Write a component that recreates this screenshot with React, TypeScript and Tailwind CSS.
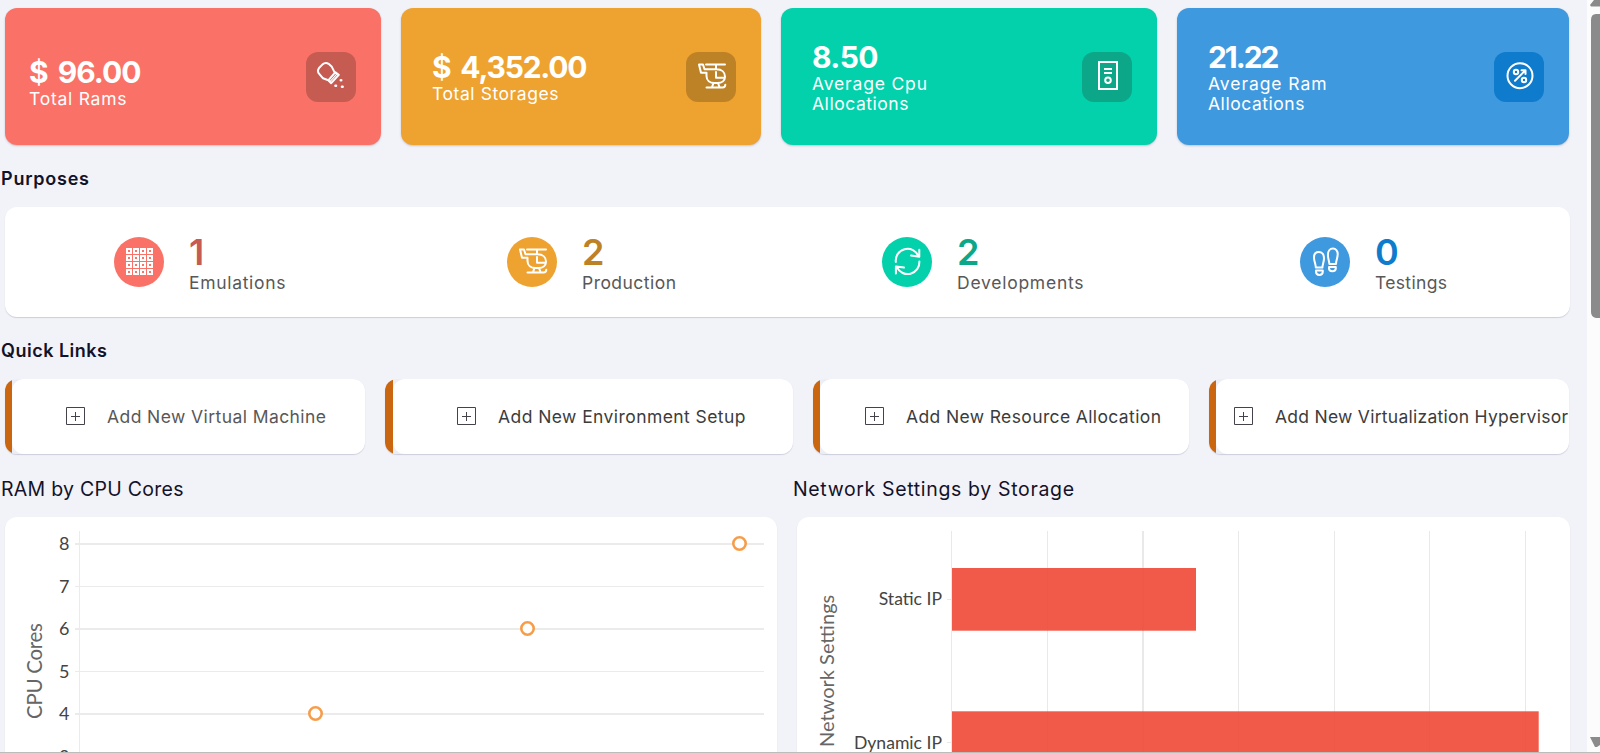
import { useLayoutEffect, useRef, useState } from "react";
import type { ReactNode } from "react";

/* A single line of text whose tracking is computed so that it spans a given width. */
function Line({ text, width, className = "" }: { text: string; width: number; className?: string }) {
  const ref = useRef<HTMLSpanElement>(null);
  const [tracking, setTracking] = useState(0);
  useLayoutEffect(() => {
    if (!ref.current || text.length < 2) return;
    const natural = ref.current.getBoundingClientRect().width - tracking * text.length;
    setTracking((width + 1.5 - natural) / (text.length - 1));
  }, [text, width]);
  return (
    <span className={`block whitespace-nowrap ${className}`}>
      <span ref={ref} style={{ letterSpacing: tracking }}>
        {text}
      </span>
    </span>
  );
}

function Icon({ children, sw = 2 }: { children: ReactNode; sw?: number }) {
  return (
    <svg viewBox="0 0 50 50" className="size-[50px]" fill="none" stroke="#fff" strokeWidth={sw} strokeLinecap="round" strokeLinejoin="round">
      {children}
    </svg>
  );
}

const Shaker = () => (
  <Icon>
    <path d="M22.3 28.3 17 26.3 12.8 21.3Q11 18.8 13 16L16.3 12.6Q19.5 9.8 22.6 11.8L25.6 14.4 28.6 20.4M22.3 28.3 29.4 20.2 32.8 22.8 25.2 31.2Z" />
    <path d="m24 29.6 7.2-8" strokeWidth="1.2" />
    <path d="M34.8 28.3h.4M29.5 33.7h.5M36 34.7h.6" strokeWidth="2.6" />
  </Icon>
);

const Helicopter = () => (
  <Icon>
    <path d="M20 12.5H39M30 12.5V17M13 12.5H17L18.5 17.3H30.5C36 17.3 39 20.6 39 24.5S36 31 31.5 31H28.5C24 31 20.5 28.5 20.5 24V20.8H15Z" />
    <path d="M30 20V25.8H38.500M27.5 31 26 35.2M32 31 33.5 35.2M20.5 35.5H36.5C38.5 35.5 39.3 34.4 39.3 32.8" />
  </Icon>
);

const Server = () => (
  <Icon sw={2}>
    <path d="M17 10H35V37H17ZM22 17H30M22 21H30" strokeLinecap="butt" strokeLinejoin="miter" />
    <circle cx="26" cy="28.3" r="2.8" />
  </Icon>
);

const Percent = () => (
  <Icon>
    <circle cx="26" cy="23.7" r="12.5" />
    <circle cx="22" cy="20" r="2.2" />
    <circle cx="30" cy="28" r="2.2" />
    <path d="M21 28.800 31.3 18.4M27.5 18.2H31.5V22" />
  </Icon>
);

const Grid = () => (
  <Icon sw={2}>
    {[0, 1, 2, 3].map((r) =>
      [0, 1, 2, 3].map((c) => <rect key={`${r}-${c}`} x={13 + c * 7} y={12 + r * 7} width="4" height="4" strokeLinejoin="miter" />),
    )}
  </Icon>
);

const Refresh = () => (
  <Icon>
    <path d="M13.8 25A11.8 11.8 0 0 1 36.5 19.3M37.3 12.8V19.8L29 18.6" />
    <path d="M37.4 24.5A11.8 11.8 0 0 1 15 30.4M13.9 36.6V29.4L22 30.6" />
  </Icon>
);

const Shoes = () => (
  <Icon>
    <path d="M15.8 30.6C15.8 27 14 24.5 14 20.4C14 17 16 14.9 18.8 14.9C22 14.9 24 17.6 24 21.3C24 25 22.6 27 22.4 30.6ZM16 33.6H22.8V34.8C22.8 39 16 39 16 34.8Z" />
    <path d="M36 27C36 23.6 37.7 21.3 37.7 17.1C37.7 13.8 35.8 11.6 33 11.6C29.800 11.6 27.9 14.3 27.9 17.9C27.9 21.5 29.1 23.5 29.4 27ZM35.8 30H29V31.2C29 35.3 35.8 35.3 35.8 31.2Z" />
  </Icon>
);

function StatCard({ box, text, badge, icon, value, valueW, lines }: { box: string; text: string; badge: string; icon: ReactNode; value: string; valueW: number; lines: [string, number][] }) {
  return (
    <div className={`flex h-[137px] justify-between rounded-xl pr-[25px] text-white shadow-[0_1px_2px_rgba(60,60,100,0.25)] ${box}`}>
      <div className={text}>
        <Line text={value} width={valueW} className="text-[30px] leading-[33px] font-bold [word-spacing:4px]" />
        {lines.map(([t, w]) => (
          <Line key={t} text={t} width={w} className="text-[17.5px] leading-5" />
        ))}
      </div>
      <div className={`mt-11 size-[50px] rounded-xl ${badge}`}>{icon}</div>
    </div>
  );
}

function Purpose({ box, circle, color, icon, value, valueW, label, labelW }: { box: string; circle: string; color: string; icon: ReactNode; value: string; valueW: number; label: string; labelW: number }) {
  return (
    <div className={`flex ${box}`}>
      <div className={`mt-[30px] size-[50px] shrink-0 rounded-full ${circle}`}>{icon}</div>
      <div className="ml-[25px] pt-[25px]">
        <Line text={value} width={valueW} className={`text-[36px] leading-10 font-semibold ${color}`} />
        <Line text={label} width={labelW} className="mt-px text-[17.5px] leading-5 text-[#585858]" />
      </div>
    </div>
  );
}

function QuickLink({ box, pad, color, label, width }: { box: string; pad: string; color: string; label: string; width: number }) {
  return (
    <div className={`h-[75px] overflow-hidden rounded-xl shadow-[0_1px_1px_rgba(60,60,110,0.2)] ${box}`}>
      <div className={`flex h-full items-center rounded-xl bg-white ${pad}`}>
        <svg viewBox="0 0 19 19" className="size-[19px] shrink-0" fill="none" stroke="#44424a">
          <path d="M.5.5H18.5V17.5H.5ZM9.5 5V14M5 9.5H14" />
        </svg>
        <Line text={label} width={width} className={`ml-[22px] text-[17.5px] leading-5 ${color}`} />
      </div>
    </div>
  );
}

function Card({ className = "", children }: { className?: string; children: ReactNode }) {
  return <div className={`rounded-xl bg-white shadow-[0_1px_1px_rgba(60,60,110,0.2)] ${className}`}>{children}</div>;
}

function ScatterChart() {
  return (
    <svg viewBox="5 517 772 260" className="h-[260px] w-[772px] font-['Lato',sans-serif]">
      <g fill="#ebebeb">
        <rect x="79" y="531" width="1" height="240" />
        {[543, 586, 628, 671, 713].map((y, i) => (
          <rect key={y} x="75" y={y} width="689" height={i % 2 ? 1 : 2} />
        ))}
      </g>
      <g fill="#444" fontSize="18" textAnchor="end">
        {[8, 7, 6, 5, 4, 3].map((n, i) => (
          <text key={n} x="69.5" y={550 + i * 42.5}>{n}</text>
        ))}
      </g>
      <text transform="translate(42.3 719) rotate(-90)" fontSize="20.5" fill="#666" textLength="96">CPU Cores</text>
      <g fill="#fff" stroke="#f79d4a" strokeWidth="2.6">
        <circle cx="739.5" cy="543.5" r="6.200" />
        <circle cx="527.5" cy="628.5" r="6.200" />
        <circle cx="315.5" cy="713.5" r="6.200" />
      </g>
    </svg>
  );
}

function BarChart() {
  return (
    <svg viewBox="797 517 773 260" className="h-[260px] w-[773px] font-['Lato',sans-serif]">
      <g fill="#e9e9e9">
        {[951, 1047, 1142, 1238, 1334, 1429, 1525].map((x) => (
          <rect key={x} x={x} y="531" width={x === 1142 ? 2 : 1} height="240" />
        ))}
        <rect x="947" y="599" width="4" height="1" />
        <rect x="947" y="742" width="4" height="1" />
      </g>
      <g fill="#f04834" fillOpacity=".9">
        <rect x="952" y="568" width="244" height="62.7" />
        <rect x="952" y="711.3" width="586.7" height="62" />
      </g>
      <g fill="#444" fontSize="17.600" textAnchor="end">
        <text x="942" y="605">Static IP</text>
        <text x="942" y="749">Dynamic IP</text>
      </g>
      <text transform="translate(834 747) rotate(-90)" fontSize="20" fill="#666">Network Settings</text>
    </svg>
  );
}

export default function App() {
  return (
    <div className="relative flex h-[753px] w-[1600px] overflow-hidden bg-[#f2f3f8] font-['Inter',sans-serif]">
      <main className="w-[1587px] shrink-0 pt-2">
        <section className="flex gap-5 pl-[5px]">
          <StatCard box="w-[376px] bg-[#fa7267]" text="pl-6 pt-12" badge="bg-[#c65b52]" icon={<Shaker />} value="$ 96.00" valueW={111} lines={[["Total Rams", 96]]} />
          <StatCard box="w-[360px] bg-[#eea230]" text="pl-[31px] pt-[43px]" badge="bg-[#be8226]" icon={<Helicopter />} value="$ 4,352.00" valueW={154} lines={[["Total Storages", 125]]} />
          <StatCard box="w-[376px] bg-[#02d1ac]" text="pl-[31px] pt-[33px]" badge="bg-[#0ca788]" icon={<Server />} value="8.50" valueW={65} lines={[["Average Cpu", 113.5], ["Allocations", 95]]} />
          <StatCard box="w-[392px] bg-[#3f99df]" text="pl-[31px] pt-[33px]" badge="bg-[#0f7bcd]" icon={<Percent />} value="21.22" valueW={70} lines={[["Average Ram", 117], ["Allocations", 95]]} />
        </section>

        <h2 className="mt-[21px] h-[41px] pl-px text-[#12122a]">
          <Line text="Purposes" width={86.5} className="text-[18px] leading-[25px] font-semibold" />
        </h2>
        <Card className="ml-[5px] flex h-[110px] w-[1565px]">
          <Purpose box="w-[393px] pl-[109px]" circle="bg-[#fa7267]" color="text-[#c65b52]" icon={<Grid />} value="1" valueW={10} label="Emulations" labelW={95} />
          <Purpose box="w-[375px] pl-[109px]" circle="bg-[#eea230]" color="text-[#be8226]" icon={<Helicopter />} value="2" valueW={19} label="Production" labelW={92.5} />
          <Purpose box="w-[418px] pl-[109px]" circle="bg-[#02d1ac]" color="text-[#0ca788]" icon={<Refresh />} value="2" valueW={19} label="Developments" labelW={125} />
          <Purpose box="pl-[109px]" circle="bg-[#3f99df]" color="text-[#0f7bcd]" icon={<Shoes />} value="0" valueW={20} label="Testings" labelW={70.5} />
        </Card>

        <h2 className="mt-[21px] h-[41px] pl-px text-[#12122a]">
          <Line text="Quick Links" width={104.5} className="text-[18px] leading-[25px] font-semibold" />
        </h2>
        <section className="flex gap-5 pl-[5px]">
          <QuickLink box="w-[360px] bg-[linear-gradient(to_right,#ca6510_7px,#eceef4_7px)] pl-[7px]" pad="pl-[54px]" color="text-[#585858]" label="Add New Virtual Machine" width={217.5} />
          <QuickLink box="w-[408px] bg-[linear-gradient(to_right,#ca6510_8px,#eceef4_8px)] pl-2" pad="pl-16" color="text-[#3c3c3c]" label="Add New Environment Setup" width={246} />
          <QuickLink box="w-[376px] bg-[linear-gradient(to_right,#ca6510_7px,#eceef4_7px)] pl-[7px]" pad="pl-[45px]" color="text-[#3c3c3c]" label="Add New Resource Allocation" width={253.5} />
          <QuickLink box="w-[360px] bg-[linear-gradient(to_right,#ca6510_7px,#eceef4_7px)] pl-[7px]" pad="pl-[18px]" color="text-[#3c3c3c]" label="Add New Virtualization Hypervisor" width={291.5} />
        </section>

        <div className="mt-[23px] flex">
          <section className="w-[792px]">
            <h2 className="h-10 pl-px text-[#12122a]">
              <Line text="RAM by CPU Cores" width={181} className="text-[19.5px] leading-[25px]" />
            </h2>
            <Card className="ml-[5px] w-[772px]">
              <ScatterChart />
            </Card>
          </section>
          <section>
            <h2 className="h-10 pl-px text-[#12122a]">
              <Line text="Network Settings by Storage" width={279.5} className="text-[19.5px] leading-[25px]" />
            </h2>
            <Card className="ml-[5px] w-[773px]">
              <BarChart />
            </Card>
          </section>
        </div>
      </main>

      <aside className="w-[13px] bg-[#fcfcfc]">
        <svg viewBox="0 0 13 753" className="h-[753px] w-[13px]" fill="#8b8b8b">
          <path d="M4 6.5 3 5 7 0H13V6.5ZM4 20Q4 14 9 14H13V318H9Q4 317 4 312ZM3 737H13V745L10 747H8Z" />
        </svg>
      </aside>
      <div className="absolute inset-x-0 bottom-0 h-px bg-[#bcbcbc]" />
    </div>
  );
}
